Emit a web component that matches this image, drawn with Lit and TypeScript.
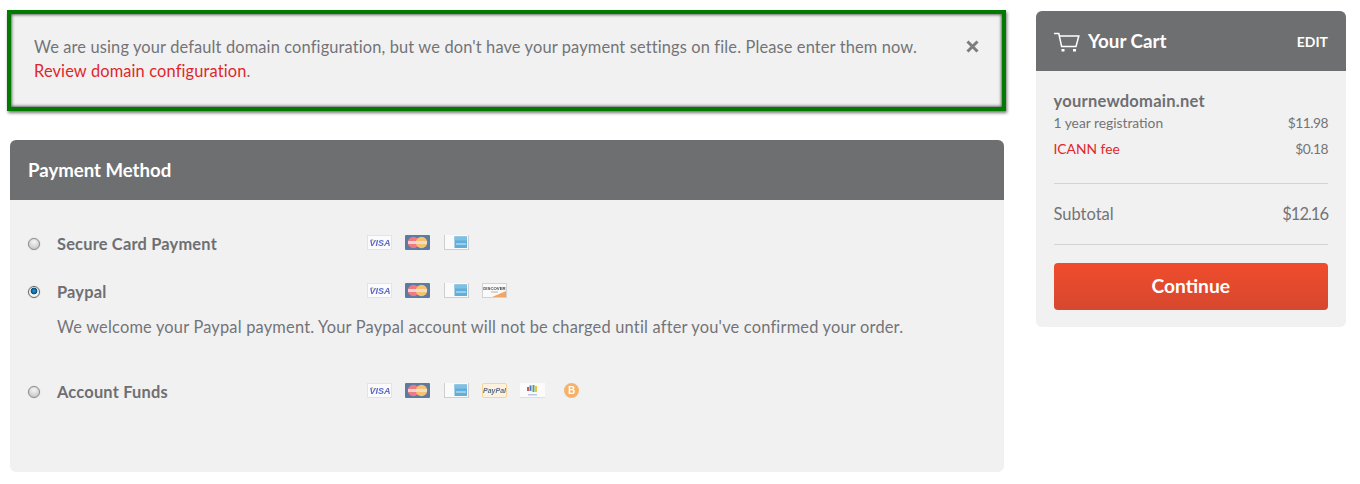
import { LitElement, html, css, svg } from "lit";
import { customElement } from "lit/decorators.js";

const visa = html`<svg class="card" viewBox="0 0 25 15"><rect width="25" height="15" fill="#fbfbfd"/><rect x=".5" y=".5" width="24" height="14" fill="none" stroke="#e4e4e4"/><path d="M3 4h3l1 3z" fill="#f0c674"/><text x="13" y="11.200" class="vt">VISA</text></svg>`;
const mc = html`<svg class="card" viewBox="0 0 25 15"><rect width="25" height="15" rx="1" fill="#5b7ba3"/><circle cx="8.500" cy="7.500" r="5.700" fill="#ee7b84"/><circle cx="16.500" cy="7.500" r="5.700" fill="#f5c26f"/><rect x="3" y="6" width="19" height="3" fill="#f0e0dc" opacity=".85"/></svg>`;
const amex = html`<svg class="card" viewBox="0 0 25 15"><rect width="25" height="15" fill="#cfcfcf"/><rect x="1" y="0" width="23" height="14" fill="#fafafa"/><rect x="10.500" y="1.500" width="12.500" height="11.500" fill="#62aedb"/><rect x="10.500" y="1.500" width="12.500" height="4" fill="#7cc0e4"/><rect x="12" y="8" width="10" height="2" fill="#9fcde7"/></svg>`;
const discover = html`<svg class="card" viewBox="0 0 25 15"><rect width="25" height="15" fill="#d2d2d2"/><rect x="1" y="1" width="23" height="13" fill="#fafafa"/><path d="M10 14 24 8v6z" fill="#f3a566"/><text x="12.500" y="7" class="dt">DISCOVER</text><rect x="9" y="8.500" width="7" height="1" fill="#b0b0b0"/></svg>`;
const paypal = html`<svg class="card" viewBox="0 0 25 15"><rect x=".5" y=".5" width="24" height="14" rx="1.500" fill="#fdf2dd" stroke="#f6d596"/><text x="12.500" y="10" class="pt">PayPal</text></svg>`;
const wallet = html`<svg class="card" viewBox="0 0 25 15"><rect width="25" height="15" fill="#fbfbfb"/><rect y="14" width="25" height="1" fill="#dedede"/><path d="M8 4v4" stroke="#d9534f" stroke-width="2"/><path d="M10.500 2.500v5.500" stroke="#3e7fd1" stroke-width="2"/><path d="M13.500 2v7" stroke="#5aa85a" stroke-width="2"/><path d="M16 3v6" stroke="#edc24c" stroke-width="2"/><rect x="8" y="11" width="9" height="1.500" fill="#b6c8e4"/></svg>`;
const bitcoin = html`<svg class="btc" viewBox="0 0 15 15"><circle cx="7.500" cy="7.500" r="7.500" fill="#f6b26b"/><text x="7.500" y="11" class="bt">B</text></svg>`;

const cartIcon = svg`<path d="M0 1.500h4.800l2.800 13h14.400l2.800-10.500H5.500" fill="none" stroke="#fff" stroke-width="1.500"/><rect x="7.500" y="17" width="3" height="2.500" fill="#fff"/><rect x="19" y="17" width="3" height="2.500" fill="#fff"/>`;

@customElement("app-root")
export class AppRoot extends LitElement {
  static styles = css`
    :host { display: block; width: 1360px; height: 484px; overflow: hidden; background: #fff; color: #6e6f71; font-family: Lato, "Open Sans", sans-serif; }
    * { box-sizing: border-box; }
    .page { display: flex; align-items: flex-start; gap: 32px; padding: 11px 0 0 10px; }
    .main { width: 994px; flex: none; }
    .alert { display: flex; justify-content: space-between; height: 101px; margin: -1px -2px 29px -3px; padding: 21px 23px 0 23px; background: #f1f1f1; border: 4px solid #007a00; box-shadow: inset 0 0 3px 1px #666, 1px 2px 3px #777; color: #737478; font-size: 16.400px; letter-spacing: .14px; line-height: 24px; }
    .alert p { margin: 0; width: 900px; }
    .alert a { color: #e0262c; text-decoration: none; }
    .close { width: 13px; height: 13px; margin-top: 5px; flex: none; }
    .panel { background: #f1f1f1; border-radius: 6px; overflow: hidden; height: 332px; }
    .head { height: 60px; background: #6e6f71; color: #fff; font-weight: 700; display: flex; align-items: center; }
    .head.pay { padding: 0 0 1px 18px; font-size: 18.600px; }
    .body { padding: 32px 18px 0; }
    .row { display: grid; grid-template-columns: 29px 310px 1fr; align-items: center; height: 24px; }
    .row + .row { margin-top: 24px; }
    .row.funds { margin-top: 41px; }
    .label { font-size: 16.400px; font-weight: 700; letter-spacing: .2px; margin-top: -2px; }
    .radio { width: 12px; height: 12px; border-radius: 50%; border: 1px solid #8b8b8b; background: radial-gradient(circle at 50% 30%, #f6f6f6, #bdbdbd); box-shadow: 0 0 1px #aaa; }
    .radio.on { background: radial-gradient(circle at 50% 40%, #2b9ad8 0, #05507f 3px, #f4f4f4 3.700px); border-color: #666; }
    .icons { display: flex; gap: 13.250px; align-items: center; height: 15px; margin-top: -4px; }
    .card { width: 25px; height: 15px; display: block; flex: none; filter: blur(.4px); }
    .btc { width: 15px; height: 15px; display: block; flex: none; margin-left: 6px; filter: blur(.3px); }
    .vt { font: italic 700 9px "Liberation Sans", sans-serif; fill: #5a6cc4; text-anchor: middle; }
    .pt { font: italic 700 7px "Liberation Sans", sans-serif; fill: #5a6c8c; text-anchor: middle; }
    .dt { font: 700 4.300px "Liberation Sans", sans-serif; fill: #444; text-anchor: middle; }
    .bt { font: 700 10px "Liberation Sans", sans-serif; fill: #fff; text-anchor: middle; }
    .desc { margin: 11px 0 0 29px; color: #737478; font-size: 16.400px; letter-spacing: .2px; line-height: 24px; }
    .cart { width: 310px; flex: none; height: 316px; background: #f1f1f1; border-radius: 6px; overflow: hidden; }
    .cart .head { justify-content: space-between; padding: 0 18px; }
    .title { display: flex; align-items: center; gap: 8px; font-size: 18.800px; padding-bottom: 2px; }
    .title svg { width: 26px; height: 20px; display: block; margin-top: 3px; }
    .edit { font-size: 14px; }
    .cbody { padding: 19px 18px 0 17.500px; }
    .domain { font-size: 16.500px; font-weight: 700; letter-spacing: .25px; line-height: 22px; }
    .line { display: flex; justify-content: space-between; font-size: 13.800px; line-height: 21px; color: #737478; }
    .line span:last-child { letter-spacing: -.5px; }
    .line.fee { margin-top: 5px; padding-bottom: 24px; border-bottom: 1px solid #d3d3d3; }
    .fee span:first-child { color: #e0262c; }
    .sub { display: flex; justify-content: space-between; align-items: center; height: 61px; border-bottom: 1px solid #d3d3d3; color: #737478; font-size: 16.500px; }
    .sub span:last-child { letter-spacing: -1px; }
    .btn { display: block; width: 100%; height: 47px; margin-top: 18px; border: 0; padding: 0 0 2px; border-radius: 4px; background: linear-gradient(#f04c2c, #d6482f); color: #fff; font: 700 19.200px Lato, sans-serif; }
  `;

  render() {
    return html`<div class="page">
      <div class="main">
        <div class="alert">
          <p>We are using your default domain configuration, but we don't have your payment settings on file. Please enter them now. <a href="#">Review domain configuration</a>.</p>
          <svg class="close" viewBox="0 0 13 13"><path d="M1.500 1.500l10 10M11.500 1.500l-10 10" stroke="#7d7d7d" stroke-width="3"/></svg>
        </div>
        <section class="panel">
          <div class="head pay">Payment Method</div>
          <div class="body">
            <div class="row"><div class="radio"></div><div class="label">Secure Card Payment</div><div class="icons">${visa}${mc}${amex}</div></div>
            <div class="row"><div class="radio on"></div><div class="label">Paypal</div><div class="icons">${visa}${mc}${amex}${discover}</div></div>
            <p class="desc">We welcome your Paypal payment. Your Paypal account will not be charged until after you've confirmed your order.</p>
            <div class="row funds"><div class="radio"></div><div class="label">Account Funds</div><div class="icons">${visa}${mc}${amex}${paypal}${wallet}${bitcoin}</div></div>
          </div>
        </section>
      </div>
      <aside class="cart">
        <div class="head">
          <div class="title"><svg viewBox="0 0 26 20">${cartIcon}</svg>Your Cart</div>
          <div class="edit">EDIT</div>
        </div>
        <div class="cbody">
          <div class="domain">yournewdomain.net</div>
          <div class="line"><span>1 year registration</span><span>$11.98</span></div>
          <div class="line fee"><span>ICANN fee</span><span>$0.18</span></div>
          <div class="sub"><span>Subtotal</span><span>$12.16</span></div>
          <button class="btn">Continue</button>
        </div>
      </aside>
    </div>`;
  }
}
